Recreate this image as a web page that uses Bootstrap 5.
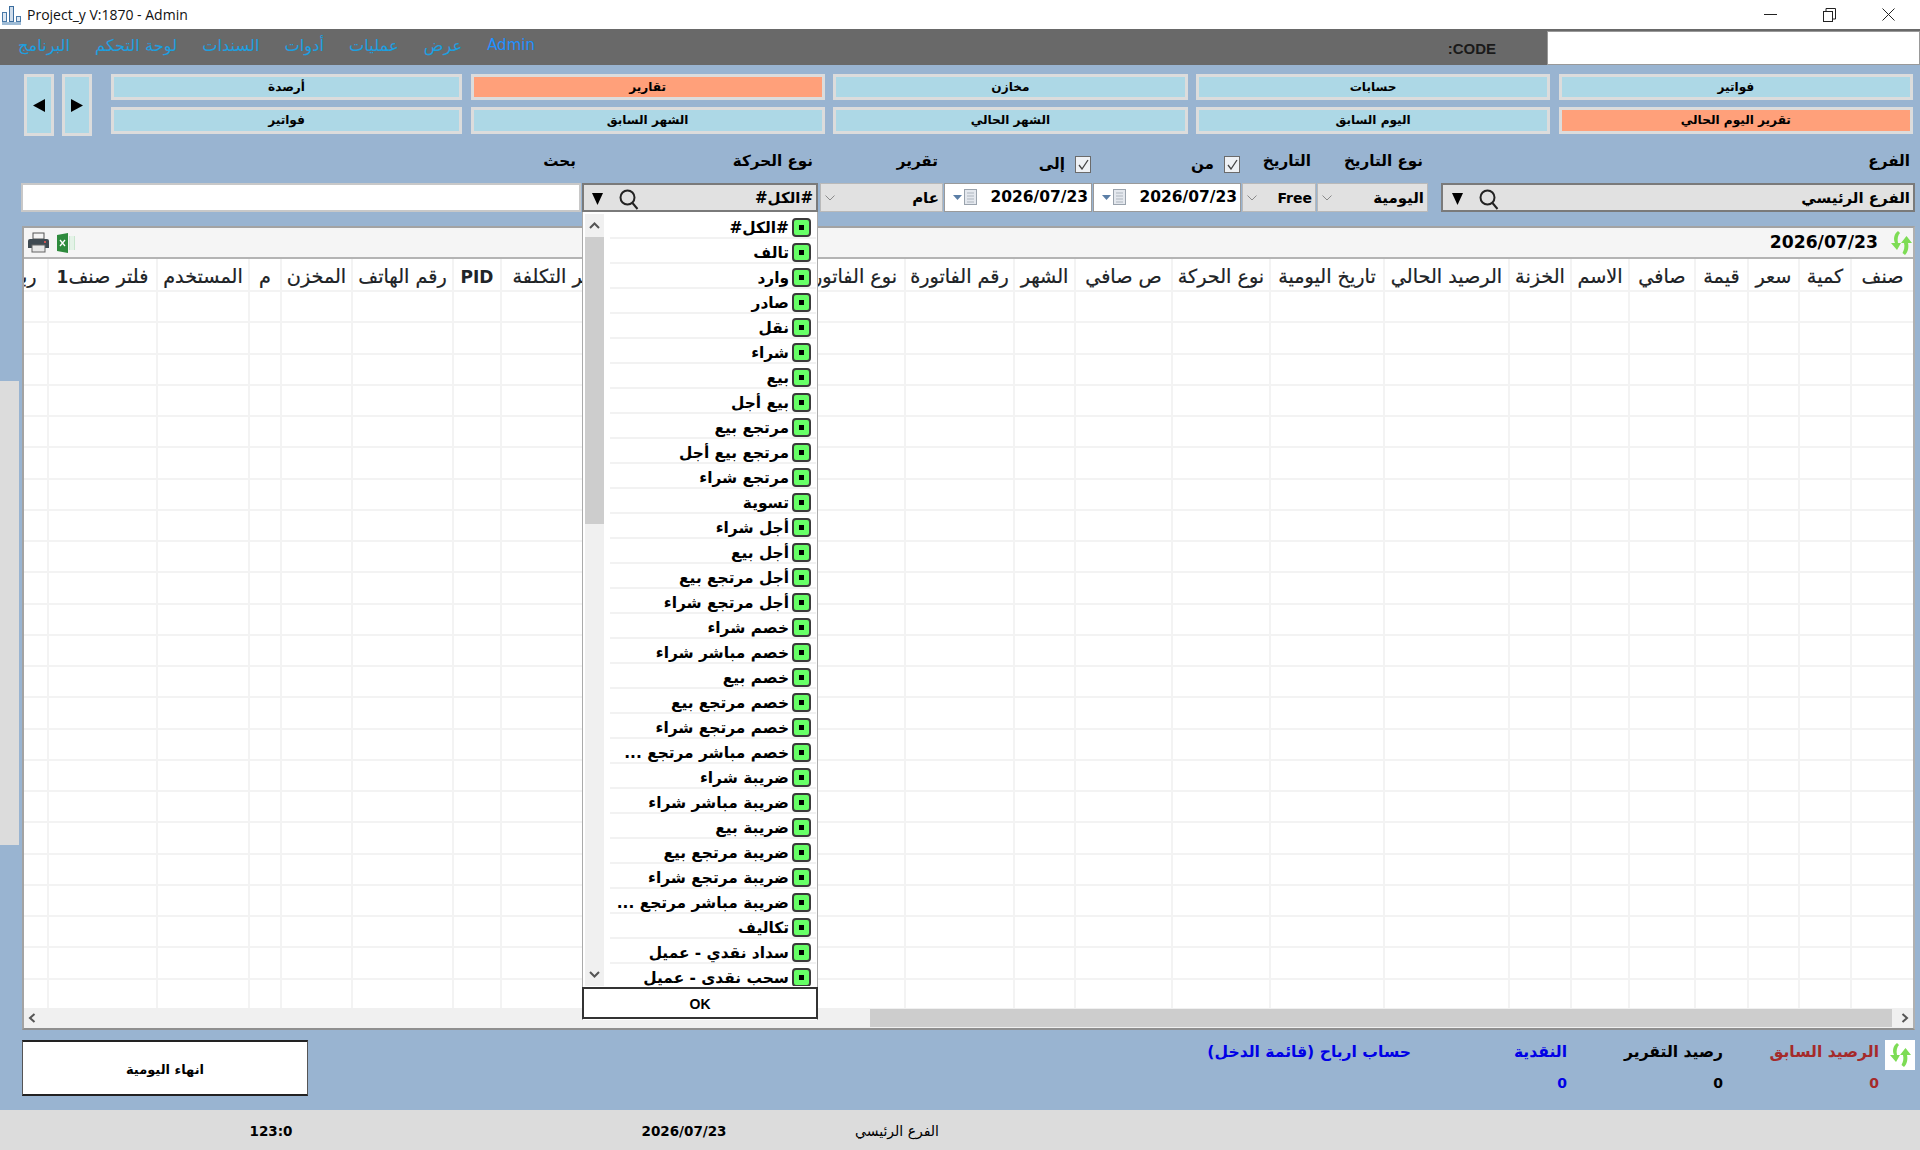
<!DOCTYPE html>
<html lang="ar">
<head>
<meta charset="utf-8">
<title>Project_y</title>
<link href="https://cdn.jsdelivr.net/npm/bootstrap@5.3.0/dist/css/bootstrap.min.css" rel="stylesheet">
<style>
html,body{height:1150px;overflow:hidden;}
body{background:#99b4d1;font-family:"DejaVu Sans","Liberation Sans",sans-serif;color:#000;font-size:14px;}
svg{display:block;flex:none;}
.win-bar{height:29px;background:#fff;font-family:"Open Sans","Noto Sans",sans-serif;font-size:14px;padding-left:2px;}
.win-title{margin-left:6px;color:#111;white-space:nowrap;}
.win-ctl{margin-left:auto;gap:46px;padding-right:25px;}
.menu-bar{height:36px;background:#696969;}
.menu-items{padding-left:18px;gap:25px;font-family:"DejaVu Sans",sans-serif;font-size:16.3px;color:#1d9fe0;line-height:1;padding-bottom:2px;}
.menu-items .lat{font-size:15px;color:#1e90ff;}
.code-tag{margin-left:auto;margin-right:51px;font:bold 15px "Liberation Sans",sans-serif;color:#1a1a1a;padding-top:2px;}
.code-box{width:373px;height:34px;margin-top:1px;background:#fff;border:1px solid #999;border-radius:0;}
.tile-zone{margin-top:9px;padding-left:24px;padding-right:7px;height:62px;}
.step-btn{width:30px;height:62px;margin-right:8px;padding:0;border:3px solid #dcdcdc;border-radius:0;background:#add8e6;}
.tile-grid{display:grid;grid-template-columns:351px repeat(4,1fr);grid-template-rows:26px 27px;gap:7px 8.5px;flex:1;margin-left:11px;height:60px;}
.tile{padding:0;border:3px solid #dcdcdc;border-radius:0;background:#add8e6;font-size:12.1px;font-weight:700;color:#000;line-height:1;}
.tile.hot{background:#ffa07a;}
.filter-row{height:76px;padding-right:5px;padding-left:21px;gap:1px;}
.fld{display:flex;flex-direction:column;flex:none;position:relative;}
.fld-lbl{height:47px;padding:15px 5px 0 0;font-size:15.2px;font-weight:700;line-height:20px;white-space:nowrap;text-align:right;}
.fld-lbl.chk{padding:20px 1px 0 0;gap:10px;line-height:16px;}
.ctl{height:29px;display:flex;align-items:center;font-size:15px;font-weight:700;white-space:nowrap;}
.ctl>span:last-child{padding-top:2px;}
.w-branch{width:474px;margin-left:12px;}
.w-kind{width:111px;}
.w-free{width:74px;}
.w-date{width:148px;}
.w-report{width:123px;}
.w-move{width:236px;margin-right:1px;}
.w-search{width:560px;}
.combo-x{background:#e1e1e1;border:2px solid #7a7a7a;padding:0 3px 0 9px;}
.combo-x svg{margin-top:3px;}
.combo-s{background:#e1e1e1;border:1px solid #b9b9b9;padding:0 3px 0 4px;}
.date-ctl{background:#fff;border:1px solid #9a9a9a;padding:0 3px 0 0;font-size:15.5px;}
.date-ctl>span:last-child{padding-top:0;}
.date-tools{gap:2px;}
.free-v{font-size:14px;}
.tick{width:16px;height:17px;background:#eef1f5;border:1px solid #6b6b6b;}
.search-in{height:29px;border-radius:0;border:2px solid #c8c8c8;padding:0 4px;}
.drop{position:absolute;top:76px;left:0;width:236px;height:808px;background:#fff;z-index:5;border-left:1px solid #aaa;border-right:1px solid #aaa;display:flex;flex-direction:column;}
.drop-body{height:775px;display:flex;padding:2px 1px 0 2px;overflow:hidden;flex:none;}
.drop-track{width:19px;height:772px;background:#f0f0f0;margin-right:6px;flex:none;position:relative;}
.drop-arrow{height:23px;display:flex;align-items:center;justify-content:center;}
.drop-thumb{height:287px;background:#cdcdcd;}
.drop-arrow.lo{position:absolute;bottom:0;left:0;right:0;}
.drop-list{flex:1;margin:0;padding:0;list-style:none;overflow:hidden;height:772px;}
.drop-list li{height:25px;border-bottom:2px solid #f2f2f2;display:flex;align-items:flex-start;padding:3px 5px 0 0;gap:3px;font-size:15.4px;font-weight:700;line-height:21px;white-space:nowrap;}
.drop-list li>span:last-child{padding-top:1px;}
.gbox{width:19px;height:19px;margin-top:1px;background:#66ff66;border:2px solid #3a3a3a;border-radius:4px;display:flex;align-items:center;justify-content:center;flex:none;}
.gbox i{width:5px;height:5px;background:#000;display:block;}
.ok-btn{height:32px;border:2px solid #333;border-radius:0;margin:0 -1px;background:#fff;font:bold 14px "Liberation Sans",sans-serif;padding:1px 0 0;color:#000;flex:none;}
.grid-panel{margin:14px 5px 0 22px;height:804px;background:#fff;border:2px solid #a3a3a3;border-bottom-color:#8f8f8f;border-right-color:#b0b0b0;display:flex;flex-direction:column;overflow:hidden;}
.grid-tools{height:31px;flex:none;background:#f5f5f5;border-bottom:2px solid #b4b4b4;padding:0 1px 0 4px;}
.stamp{margin-left:auto;font-size:17.2px;font-weight:700;margin-right:13px;}
.grid-wrap{height:749px;flex:none;overflow:hidden;display:flex;justify-content:flex-end;}
.data-tbl{table-layout:fixed;width:1915px;min-width:1915px;margin:0;border-collapse:collapse;--bs-table-bg:#fff;}
.data-tbl th,.data-tbl td{border:2px solid #f3f3f3;padding:0;}
.data-tbl th{height:32px;padding-top:5px;font-size:19.2px;line-height:24px;font-weight:400;text-align:center;vertical-align:middle;white-space:nowrap;overflow:hidden;-webkit-text-stroke:.2px #000;}
.data-tbl th.strong{font-weight:700;font-size:17px;-webkit-text-stroke:0;}
.data-tbl th b{font-size:17px;-webkit-text-stroke:0;}
.data-tbl td{height:31.25px;}
.data-tbl tr>*:first-child{border-right:0;}
.data-tbl thead th{border-top:0;border-bottom:0;}
.data-tbl col:nth-child(1){width:62px}.data-tbl col:nth-child(2){width:52px}.data-tbl col:nth-child(3){width:51px}
.data-tbl col:nth-child(4){width:53px}.data-tbl col:nth-child(5){width:66px}.data-tbl col:nth-child(6){width:58px}
.data-tbl col:nth-child(7){width:62px}.data-tbl col:nth-child(8){width:125px}.data-tbl col:nth-child(9){width:114px}
.data-tbl col:nth-child(10){width:98px}.data-tbl col:nth-child(11){width:97px}.data-tbl col:nth-child(12){width:61px}
.data-tbl col:nth-child(13){width:109px}.data-tbl col:nth-child(14){width:110px}.data-tbl col:nth-child(15){width:175px}
.data-tbl col:nth-child(16){width:119px}.data-tbl col:nth-child(17){width:48px}.data-tbl col:nth-child(18){width:101px}
.data-tbl col:nth-child(19){width:71px}.data-tbl col:nth-child(20){width:32px}.data-tbl col:nth-child(21){width:92px}
.data-tbl col:nth-child(22){width:109px}.data-tbl col:nth-child(23){width:50px}
.hbar{height:20px;flex:none;background:#f0f0f0;margin:0;}
.hbar-thumb{position:absolute;left:846px;width:1022px;top:1px;height:18px;background:#cdcdcd;}
.foot-band{height:80px;padding:10px 5px 0 22px;}
.close-day{width:286px;height:56px;background:#fff;border:0;border-top:2px solid #222;border-bottom:2px solid #222;border-left:1px solid #555;border-right:1px solid #555;border-radius:0;font-size:13px;font-weight:700;padding:3px 0 0;color:#000;}
.stat{width:156px;font-weight:700;font-size:15.6px;text-align:right;white-space:nowrap;}
.stat div{line-height:24px;}
.stat .num{margin-top:7px;font-size:14px;}
.c-red{color:#a52a2a;}.c-blu{color:#0000e6;}
.sync-box{width:30px;height:30px;background:#fff;margin-left:6px;display:flex;align-items:center;justify-content:center;}
.status-bar{height:40px;padding-top:2px;background:#dcdcdc;font-weight:700;font-size:13.5px;}
.s-a{width:542px;text-align:center;}.s-b{width:284px;text-align:center;}.s-c{width:142px;text-align:center;font-weight:400;font-size:14px;}
.side-strip{position:absolute;left:0;top:381px;width:19px;height:464px;background:#dcdcdc;}
</style>
</head>
<body class="m-0 d-flex flex-column position-relative">
<div class="side-strip"></div>
<div class="win-bar d-flex align-items-center flex-none">
  <svg width="19" height="20" viewBox="0 0 19 20"><rect x="0.5" y="7.5" width="4" height="9" fill="#dfe8f2" stroke="#4a7aa8"/><rect x="7.5" y="1.5" width="4" height="15" fill="#cfdcea" stroke="#3b6d9e"/><rect x="14.5" y="11.5" width="4" height="5" fill="#dfe8f2" stroke="#4a7aa8"/><rect x="0" y="17" width="19" height="3" fill="#9fbcd6"/></svg>
  <span class="win-title">Project_y V:1870 - Admin</span>
  <div class="win-ctl d-flex align-items-center">
    <svg width="13" height="2" viewBox="0 0 13 2"><rect width="13" height="1" fill="#222"/></svg>
    <svg width="13" height="14" viewBox="0 0 13 14" fill="none" stroke="#222"><rect x="0.5" y="3.5" width="9" height="10"/><path d="M3 3V.5h9.5V11H10"/></svg>
    <svg width="13" height="13" viewBox="0 0 13 13" stroke="#222"><path d="M.5.5l12 12M12.5.5l-12 12"/></svg>
  </div>
</div>
<nav class="menu-bar d-flex align-items-center">
  <div class="menu-items d-flex align-items-center">
    <span>البرنامج</span><span>لوحة التحكم</span><span>السندات</span><span>أدوات</span><span>عمليات</span><span>عرض</span><span class="lat">Admin</span>
  </div>
  <span class="code-tag">:CODE</span>
  <input class="code-box form-control" type="text" aria-label="CODE">
</nav>
<div class="tile-zone d-flex">
  <button class="btn step-btn d-flex align-items-center justify-content-center" type="button" aria-label="السابق"><svg width="12" height="13" viewBox="0 0 12 13"><path d="M12 0v13L0 6.5z"/></svg></button>
  <button class="btn step-btn d-flex align-items-center justify-content-center" type="button" aria-label="التالي"><svg width="12" height="13" viewBox="0 0 12 13"><path d="M0 0v13l12-6.500z"/></svg></button>
  <div class="tile-grid">
    <button class="btn tile" type="button">أرصدة</button>
    <button class="btn tile hot" type="button">تقارير</button>
    <button class="btn tile" type="button">مخازن</button>
    <button class="btn tile" type="button">حسابات</button>
    <button class="btn tile" type="button">فواتير</button>
    <button class="btn tile" type="button">فواتير</button>
    <button class="btn tile" type="button">الشهر السابق</button>
    <button class="btn tile" type="button">الشهر الحالي</button>
    <button class="btn tile" type="button">اليوم السابق</button>
    <button class="btn tile hot" type="button">تقرير اليوم الحالي</button>
  </div>
</div>
<div class="filter-row d-flex flex-row-reverse">
  <div class="fld w-branch">
    <div class="fld-lbl">الفرع</div>
    <div class="ctl combo-x justify-content-between">
      <span class="d-flex align-items-center gap-3"><svg width="11" height="12" viewBox="0 0 11 12"><path d="M0 0h11L5.500 12z"/></svg><svg width="20" height="21" viewBox="0 0 20 21" fill="none" stroke="#222" stroke-width="2"><circle cx="8.500" cy="8.500" r="7"/><path d="M13.500 14l5 6"/></svg></span>
      <span>الفرع الرئيسي</span>
    </div>
  </div>
  <div class="fld w-kind">
    <div class="fld-lbl">نوع التاريخ</div>
    <div class="ctl combo-s justify-content-between"><svg width="10" height="6" viewBox="0 0 10 6" fill="none" stroke="#8a8a8a"><path d="M.5.5L5 5 9.500.5"/></svg><span>اليومية</span></div>
  </div>
  <div class="fld w-free">
    <div class="fld-lbl">التاريخ</div>
    <div class="ctl combo-s justify-content-between"><svg width="10" height="6" viewBox="0 0 10 6" fill="none" stroke="#8a8a8a"><path d="M.5.5L5 5 9.500.5"/></svg><span class="free-v">Free</span></div>
  </div>
  <div class="fld w-date">
    <div class="fld-lbl chk d-flex flex-row-reverse"><span class="tick d-flex align-items-center justify-content-center"><svg width="11" height="11" viewBox="0 0 11 11" fill="none" stroke="#444" stroke-width="1.300"><path d="M1 6l3 4 6-9"/></svg></span><span>من</span></div>
    <div class="ctl date-ctl justify-content-between">
      <span class="d-flex align-items-center date-tools ms-2"><svg width="9" height="5" viewBox="0 0 9 5"><path d="M0 0h9L4.500 5z" fill="#5b7ea6"/></svg><svg width="13" height="17" viewBox="0 0 13 17"><rect x=".5" y=".5" width="12" height="15" fill="#e4e8ee" stroke="#9aa3ad"/><path d="M3 4h7M3 7h7M3 10h7M3 13h7" stroke="#aeb6bf"/></svg></span>
      <span class="val">2026/07/23</span>
    </div>
  </div>
  <div class="fld w-date">
    <div class="fld-lbl chk d-flex flex-row-reverse"><span class="tick d-flex align-items-center justify-content-center"><svg width="11" height="11" viewBox="0 0 11 11" fill="none" stroke="#444" stroke-width="1.300"><path d="M1 6l3 4 6-9"/></svg></span><span>إلى</span></div>
    <div class="ctl date-ctl justify-content-between">
      <span class="d-flex align-items-center date-tools ms-2"><svg width="9" height="5" viewBox="0 0 9 5"><path d="M0 0h9L4.500 5z" fill="#5b7ea6"/></svg><svg width="13" height="17" viewBox="0 0 13 17"><rect x=".5" y=".5" width="12" height="15" fill="#e4e8ee" stroke="#9aa3ad"/><path d="M3 4h7M3 7h7M3 10h7M3 13h7" stroke="#aeb6bf"/></svg></span>
      <span class="val">2026/07/23</span>
    </div>
  </div>
  <div class="fld w-report">
    <div class="fld-lbl">تقرير</div>
    <div class="ctl combo-s justify-content-between"><svg width="10" height="6" viewBox="0 0 10 6" fill="none" stroke="#8a8a8a"><path d="M.5.5L5 5 9.500.5"/></svg><span>عام</span></div>
  </div>
  <div class="fld w-move">
    <div class="fld-lbl">نوع الحركة</div>
    <div class="ctl combo-x justify-content-between ps-2">
      <span class="d-flex align-items-center gap-3"><svg width="11" height="12" viewBox="0 0 11 12"><path d="M0 0h11L5.500 12z"/></svg><svg width="20" height="21" viewBox="0 0 20 21" fill="none" stroke="#222" stroke-width="2"><circle cx="8.500" cy="8.500" r="7"/><path d="M13.500 14l5 6"/></svg></span>
      <span dir="rtl">#الكل#</span>
    </div>
    <div class="drop">
      <div class="drop-body">
        <div class="drop-track">
          <div class="drop-arrow"><svg width="11" height="7" viewBox="0 0 11 7" fill="none" stroke="#555" stroke-width="2"><path d="M1 6l4.500-4.500L10 6"/></svg></div>
          <div class="drop-thumb"></div>
          <div class="drop-arrow lo"><svg width="11" height="7" viewBox="0 0 11 7" fill="none" stroke="#555" stroke-width="2"><path d="M1 1l4.500 4.500L10 1"/></svg></div>
        </div>
        <ul class="drop-list" dir="rtl">
          <li><span class="gbox"><i></i></span><span>#الكل#</span></li>
          <li><span class="gbox"><i></i></span><span>تالف</span></li>
          <li><span class="gbox"><i></i></span><span>وارد</span></li>
          <li><span class="gbox"><i></i></span><span>صادر</span></li>
          <li><span class="gbox"><i></i></span><span>نقل</span></li>
          <li><span class="gbox"><i></i></span><span>شراء</span></li>
          <li><span class="gbox"><i></i></span><span>بيع</span></li>
          <li><span class="gbox"><i></i></span><span>بيع أجل</span></li>
          <li><span class="gbox"><i></i></span><span>مرتجع بيع</span></li>
          <li><span class="gbox"><i></i></span><span>مرتجع بيع أجل</span></li>
          <li><span class="gbox"><i></i></span><span>مرتجع شراء</span></li>
          <li><span class="gbox"><i></i></span><span>تسوية</span></li>
          <li><span class="gbox"><i></i></span><span>أجل شراء</span></li>
          <li><span class="gbox"><i></i></span><span>أجل بيع</span></li>
          <li><span class="gbox"><i></i></span><span>أجل مرتجع بيع</span></li>
          <li><span class="gbox"><i></i></span><span>أجل مرتجع شراء</span></li>
          <li><span class="gbox"><i></i></span><span>خصم شراء</span></li>
          <li><span class="gbox"><i></i></span><span>خصم مباشر شراء</span></li>
          <li><span class="gbox"><i></i></span><span>خصم بيع</span></li>
          <li><span class="gbox"><i></i></span><span>خصم مرتجع بيع</span></li>
          <li><span class="gbox"><i></i></span><span>خصم مرتجع شراء</span></li>
          <li><span class="gbox"><i></i></span><span>خصم مباشر مرتجع ...</span></li>
          <li><span class="gbox"><i></i></span><span>ضريبة شراء</span></li>
          <li><span class="gbox"><i></i></span><span>ضريبة مباشر شراء</span></li>
          <li><span class="gbox"><i></i></span><span>ضريبة بيع</span></li>
          <li><span class="gbox"><i></i></span><span>ضريبة مرتجع بيع</span></li>
          <li><span class="gbox"><i></i></span><span>ضريبة مرتجع شراء</span></li>
          <li><span class="gbox"><i></i></span><span>ضريبة مباشر مرتجع ...</span></li>
          <li><span class="gbox"><i></i></span><span>تكاليف</span></li>
          <li><span class="gbox"><i></i></span><span>سداد نقدي - عميل</span></li>
          <li><span class="gbox"><i></i></span><span>سحب نقدي - عميل</span></li>
        </ul>
      </div>
      <button class="btn ok-btn" type="button">OK</button>
    </div>
  </div>
  <div class="fld w-search">
    <div class="fld-lbl">بحث</div>
    <input class="form-control search-in" type="text" aria-label="بحث">
  </div>
</div>
<section class="grid-panel">
  <div class="grid-tools d-flex align-items-center">
    <svg width="21" height="21" viewBox="0 0 21 21"><rect x="5" y="1" width="11" height="6" fill="#f4f4f4" stroke="#555"/><path d="M2 7h17a2 2 0 0 1 2 2v7H0V9a2 2 0 0 1 2-2z" fill="#3f4a52"/><rect x="4" y="13" width="13" height="7" fill="#e8e8e8" stroke="#666"/><rect x="16" y="9" width="2" height="2" fill="#c55"/></svg>
    <svg class="ms-2" width="19" height="20" viewBox="0 0 19 20"><path d="M0 2l11-2v20L0 18z" fill="#2e8b3d"/><path d="M3 7l5 6M8 7l-5 6" stroke="#fff" stroke-width="1.300"/><path d="M12 3h6v14h-6z" fill="#c9e6cf"/><path d="M14 3v14M16 3v14" stroke="#fff"/></svg>
    <span class="stamp">2026/07/23</span>
    <svg width="21" height="26" viewBox="0 0 21 26" fill="#7ddc55"><path d="M7 1c-4 3-5 8-3 12H0l6 7 4-7H7C6 9 7 5 9 3z"/><path d="M14 25c3-3 4-8 3-12h4l-5.500-7L10 13h3c1 4 0 7-1.500 10z"/></svg>
  </div>
  <div class="grid-wrap">
    <table class="table data-tbl" dir="rtl">
      <colgroup><col><col><col><col><col><col><col><col><col><col><col><col><col><col><col><col><col><col><col><col><col><col><col></colgroup>
      <thead><tr><th>صنف</th><th>كمية</th><th>سعر</th><th>قيمة</th><th>صافي</th><th>الاسم</th><th>الخزنة</th><th>الرصيد الحالي</th><th>تاريخ اليومية</th><th>نوع الحركة</th><th>ص صافي</th><th>الشهر</th><th>رقم الفاتورة</th><th>نوع الفاتورة</th><th></th><th>سعر التكلفة</th><th class="strong">PID</th><th>رقم الهاتف</th><th>المخزن</th><th>م</th><th>المستخدم</th><th>فلتر صنف<b>1</b></th><th>ربح</th></tr></thead>
      <tbody id="gridRows"><tr><td></td><td></td><td></td><td></td><td></td><td></td><td></td><td></td><td></td><td></td><td></td><td></td><td></td><td></td><td></td><td></td><td></td><td></td><td></td><td></td><td></td><td></td><td></td></tr></tbody>
    </table>
  </div>
  <div class="hbar position-relative d-flex align-items-center justify-content-between px-1">
    <svg width="8" height="10" viewBox="0 0 8 10" fill="none" stroke="#555" stroke-width="2"><path d="M6.500 1L2 5l4.500 4"/></svg>
    <div class="hbar-thumb"></div>
    <svg width="8" height="10" viewBox="0 0 8 10" fill="none" stroke="#555" stroke-width="2"><path d="M1.500 1L6 5 1.500 9"/></svg>
  </div>
</section>
<div class="foot-band d-flex justify-content-between align-items-start">
  <button class="btn close-day" type="button">انهاء اليومية</button>
  <div class="d-flex flex-row-reverse">
    <div class="sync-box"><svg width="21" height="26" viewBox="0 0 21 26" fill="#7ddc55"><path d="M7 1c-4 3-5 8-3 12H0l6 7 4-7H7C6 9 7 5 9 3z"/><path d="M14 25c3-3 4-8 3-12h4l-5.500-7L10 13h3c1 4 0 7-1.500 10z"/></svg></div>
    <div class="stat c-red"><div>الرصيد السابق</div><div class="num">0</div></div>
    <div class="stat"><div>رصيد التقرير</div><div class="num">0</div></div>
    <div class="stat c-blu"><div>النقدية</div><div class="num">0</div></div>
    <div class="stat c-blu" dir="rtl"><div>حساب ارباح (قائمة الدخل)</div></div>
  </div>
</div>
<footer class="status-bar d-flex align-items-center">
  <span class="s-a">123:0</span><span class="s-b">2026/07/23</span><span class="s-c">الفرع الرئيسي</span>
</footer>
<script>
var b=document.getElementById('gridRows'),r=b.firstElementChild;for(var i=0;i<22;i++)b.appendChild(r.cloneNode(true));
</script>
<script src="https://cdn.jsdelivr.net/npm/bootstrap@5.3.0/dist/js/bootstrap.bundle.min.js"></script>
</body>
</html>
